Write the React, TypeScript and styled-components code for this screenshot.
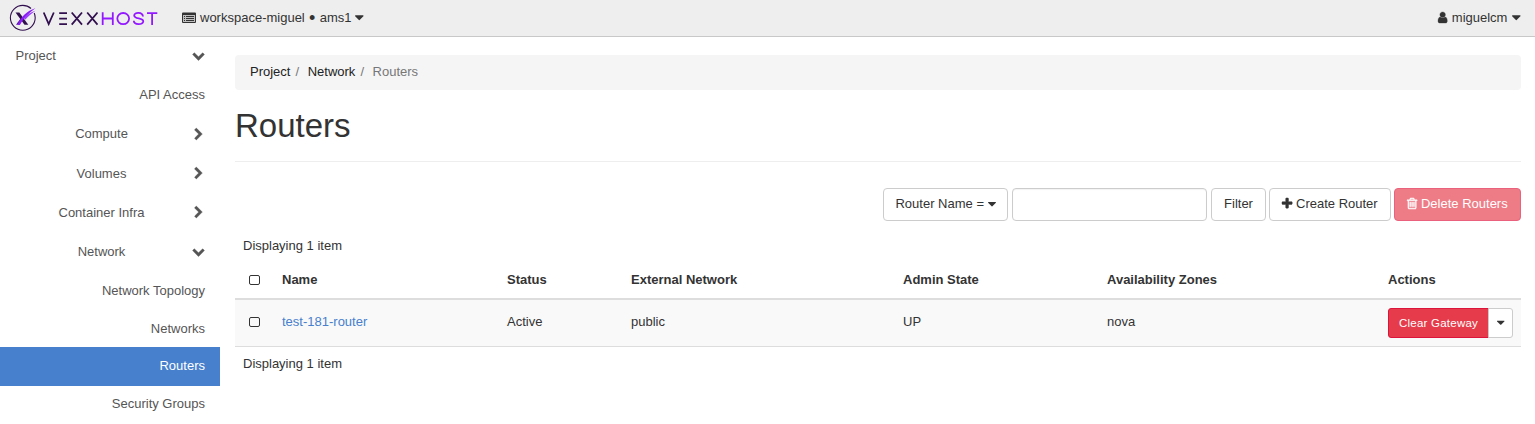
import React from 'react';
import styled, { createGlobalStyle, css } from 'styled-components';

const GlobalStyle = createGlobalStyle`
  * { box-sizing: border-box; }
  body {
    margin: 0;
    background: #fff;
    color: #333;
    font: 13px/18px "Liberation Sans", Arial, sans-serif;
    overflow: hidden;
  }
`;

const paths = {
  trash:
    'M704 736v576q0 14-9 23t-23 9h-64q-14 0-23-9t-9-23v-576q0-14 9-23t23-9h64q14 0 23 9t9 23zm256 0v576q0 14-9 23t-23 9h-64q-14 0-23-9t-9-23v-576q0-14 9-23t23-9h64q14 0 23 9t9 23zm256 0v576q0 14-9 23t-23 9h-64q-14 0-23-9t-9-23v-576q0-14 9-23t23-9h64q14 0 23 9t9 23zm128 724v-948h-896v948q0 22 7 40.5t14.5 27 10.5 8.5h832q3 0 10.5-8.5t14.5-27 7-40.5zm-672-1076h448l-48-117q-7-9-17-11h-317q-10 2-17 11zm928 32v64q0 14-9 23t-23 9h-96v948q0 83-47 143.5t-113 60.5h-832q-66 0-113-58.5t-47-141.5v-952h-96q-14 0-23-9t-9-23v-64q0-14 9-23t23-9h309l70-167q15-37 54-63t79-26h320q40 0 79 26t54 63l70 167h309q14 0 23 9t9 23z',
  plus:
    'M1600 736v192q0 40-28 68t-68 28h-416v416q0 40-28 68t-68 28h-192q-40 0-68-28t-28-68v-416h-416q-40 0-68-28t-28-68v-192q0-40 28-68t68-28h416v-416q0-40 28-68t68-28h192q40 0 68 28t28 68v416h416q40 0 68 28t28 68z',
  user:
    'M1536 1399q0 109-62.5 187t-150.5 78h-854q-88 0-150.5-78t-62.5-187q0-85 8.5-160.5t31.5-152 58.5-131 94-89 134.5-34.5q131 128 313 128t313-128q76 0 134.5 34.5t94 89 58.5 131 31.5 152 8.5 160.5zm-256-887q0 159-112.5 271.5t-271.5 112.5-271.5-112.5-112.5-271.5 112.5-271.5 271.5-112.5 271.5 112.5 112.5 271.5z',
  right:
    'M1363 877l-742 742q-19 19-45 19t-45-19l-166-166q-19-19-19-45t19-45l531-531-531-531q-19-19-19-45t19-45l166-166q19-19 45-19t45 19l742 742q19 19 19 45t-19 45z',
  down:
    'M1683 808l-742 741q-19 19-45 19t-45-19l-742-741q-19-19-19-45.5t19-45.5l166-165q19-19 45-19t45 19l531 531 531-531q19-19 45-19t45 19l166 165q19 19 19 45.5t-19 45.5z',
  caret:
    'M1408 704q0 26-19 45l-448 448q-19 19-45 19t-45-19l-448-448q-19-19-19-45t19-45 45-19h896q26 0 45 19t19 45z',
};

type IconName = keyof typeof paths;

const Glyph = styled.svg`
  display: block;
  flex: none;
  overflow: visible;
  fill: currentColor;
`;

const boxes: Record<IconName, [number, number]> = {
  trash: [192, 1408],
  plus: [192, 1408],
  user: [256, 1280],
  right: [256, 1280],
  down: [0, 1792],
  caret: [384, 1024],
};

function Icon({ name, size = 13, weight = 0 }: { name: IconName; size?: number; weight?: number }) {
  const [x, w] = boxes[name];
  return (
    <Glyph viewBox={`${x} 0 ${w} 1792`} width={(w / 1792) * size} height={size}>
      <path d={paths[name]} stroke="currentColor" strokeWidth={weight} />
    </Glyph>
  );
}

const Navbar = styled.header`
  display: flex;
  align-items: center;
  height: 37px;
  padding: 0 14px 1px 9px;
  background: #eee;
  border-bottom: 1px solid #c8c8c8;
`;

const NavItem = styled.div<{ $gap: number; $end?: boolean }>`
  display: flex;
  align-items: center;
  gap: ${(p) => p.$gap}px;
  margin-left: ${(p) => (p.$end ? 'auto' : '23px')};
  white-space: pre;
`;

const Bullet = styled.span`
  display: inline-block;
  width: 7.7px;
  text-align: center;
  font-size: 18px;
  line-height: 13px;
  vertical-align: -2.5px;
`;

const Body = styled.div`
  display: flex;
`;

const Sidebar = styled.nav`
  flex: none;
  width: 220px;
  color: #555;
`;

const SideRow = styled.div<{ $h: number }>`
  display: flex;
  align-items: center;
  justify-content: space-between;
  height: ${(p) => p.$h}px;
  padding: 0 15px 0 15.5px;
`;

const GroupLabel = styled.span`
  flex: 1;
  padding-right: 4.5px;
  text-align: center;
`;

const Chevron = styled.span<{ $lift?: boolean }>`
  display: flex;
  justify-content: center;
  width: 13px;
  padding-bottom: ${(p) => (p.$lift ? 2 : 0)}px;
`;

const SideLink = styled.div<{ $h: number; $top?: number; $active?: boolean }>`
  height: ${(p) => p.$h}px;
  padding: ${(p) => p.$top ?? 10}px 15px 0;
  text-align: right;
  ${(p) =>
    p.$active &&
    css`
      background: #4780cd;
      color: #fff;
    `}
`;

const Main = styled.main`
  flex: 1;
  padding: 18px 14px 0 15px;
`;

const Breadcrumb = styled.div`
  display: flex;
  height: 35px;
  padding: 8px 15px;
  background: #f5f5f5;
  border-radius: 4px;
`;

const Crumb = styled.span<{ $current?: boolean }>`
  color: ${(p) => (p.$current ? '#777' : '#222')};
  &:not(:first-child)::before {
    content: '/';
    padding: 0 8.6px 0 5px;
    color: #777;
  }
`;

const Title = styled.h1`
  height: 72px;
  margin: 0;
  padding-top: 17px;
  border-bottom: 1px solid #eee;
  font-size: 33px;
  font-weight: 400;
  line-height: 37px;
`;

const Toolbar = styled.div`
  display: flex;
  justify-content: flex-end;
  gap: 3px;
  margin: 26px 0 8px;
`;

const Button = styled.button<{ $w: number; $danger?: boolean }>`
  display: flex;
  align-items: center;
  justify-content: center;
  gap: 3.5px;
  width: ${(p) => p.$w}px;
  height: 33px;
  padding: 0 0 2px;
  border: 1px solid ${(p) => (p.$danger ? '#ea617d' : '#ccc')};
  border-radius: 4px;
  background: ${(p) => (p.$danger ? '#ee7c87' : '#fff')};
  color: ${(p) => (p.$danger ? '#fff' : '#333')};
  font: inherit;
  white-space: nowrap;
`;

const FilterInput = styled.input`
  width: 195px;
  height: 33px;
  margin: 0 1px;
  border: 1px solid #ccc;
  border-radius: 4px;
  box-shadow: inset 0 1px 1px rgba(0, 0, 0, 0.05);
`;

const Caption = styled.div`
  padding: 8px;
`;

const Table = styled.table`
  width: 100%;
  table-layout: fixed;
  border-collapse: separate;
  border-spacing: 0;
  text-align: left;
  th {
    height: 37px;
    padding: 0 8px 2px;
    border-bottom: 2px solid #ddd;
  }
  td {
    height: 47px;
    padding: 0 8px;
    border-bottom: 1px solid #ddd;
    background: #f9f9f9;
  }
`;

const CellText = styled.div`
  padding-bottom: 2px;
`;

const Check = styled.span<{ $raise?: boolean }>`
  display: block;
  width: 11px;
  height: 10px;
  margin: ${(p) => (p.$raise ? '0 6px 2px' : '1px 6px 0')};
  border: 1px solid #333;
  border-radius: 2px;
`;

const Link = styled.a`
  color: #4780cd;
`;

const ActionGroup = styled.div`
  display: flex;
  width: 125px;
  height: 30px;
`;

const ClearButton = styled.button`
  width: 101px;
  padding: 0;
  border: 1px solid #dc143c;
  border-radius: 3px 0 0 3px;
  background: #e53b4a;
  color: #fff;
  font: 11.5px/16px "Liberation Sans", Arial, sans-serif;
  letter-spacing: 0.23px;
`;

const ToggleButton = styled.button`
  display: flex;
  align-items: center;
  justify-content: center;
  width: 25px;
  margin-left: -1px;
  padding: 0 0 1px;
  border: 1px solid #ccc;
  border-radius: 0 3px 3px 0;
  background: #fff;
  color: #333;
`;

function Logo() {
  return (
    <Glyph width="150" height="28" viewBox="9 4 150 28">
      <circle
        cx="22.8"
        cy="17.8"
        r="12.4"
        fill="none"
        stroke="#32104f"
        strokeWidth="1.1"
        strokeDasharray="67 5.5 6 0"
      />
      <path d="M15.5 12.5h3.8l9 12.2h-3.8z" fill="#32104f" />
      <path d="M16 24.7L20.6 18.5L22.8 19.2L18.8 24.7z" fill="#5a1a9c" />
      <path d="M17.6 25C20.3 18 26 11 35.4 8.2C29.2 12.8 23.7 17.7 19.9 25z" fill="#8a1df5" />
      <path d="M24 18.5C27 14.6 31 12 35.4 10.8C31.7 13.4 28.7 15.8 25.4 19.5z" fill="#9a3cff" />
      <g fill="none" strokeWidth="1.8">
        <path
          stroke="#32104f"
          d="M43.7 12.5L48.7 24L53.8 12.5M67 13.2H59.2M67 18.6H59.2M67 24.1H59.2M71.7 12.5L82 24.7M82 12.5L71.7 24.7M87.2 12.5L97.5 24.7M97.5 12.5L87.2 24.7"
        />
        <path
          stroke="#9418ff"
          d="M102.7 12.3V24.9M112.8 12.3V24.9M102.7 18.5H112.8M143 16.5C142.5 11.7 134.2 12 134.2 15.5C134.2 19.5 143.3 17.4 143.3 21.3C143.3 25.2 133.8 25.2 133.8 20.8M147 13.2H157.3M152.1 13V24.9"
        />
        <ellipse cx="123.2" cy="18.6" rx="5.9" ry="5.6" stroke="#9418ff" />
      </g>
    </Glyph>
  );
}

function ListIcon() {
  return (
    <Glyph width="14" height="12" viewBox="0 0 14 12">
      <path d="M1 3H13V10H1Z" opacity="0.25" />
      <path
        fillRule="evenodd"
        d="M1 .5H13Q14 .5 14 1.5V10Q14 11 13 11H1Q0 11 0 10V1.5Q0 .5 1 .5ZM1 3V10H13V3Z"
      />
      <path d="M2 4h1v1h-1zM4 4h8v1H4zM2 6h1v1h-1zM4 6h8v1H4zM2 8h1v1h-1zM4 8h8v1H4z" />
    </Glyph>
  );
}

const groups: { label: string; h: number; open?: boolean }[] = [
  { label: 'Compute', h: 40 },
  { label: 'Volumes', h: 39 },
  { label: 'Container Infra', h: 39 },
  { label: 'Network', h: 39, open: true },
];

const columns: [string, number][] = [
  ['Name', 225],
  ['Status', 124],
  ['External Network', 272],
  ['Admin State', 204],
  ['Availability Zones', 281],
  ['Actions', 141],
];

export default function App() {
  return (
    <>
      <GlobalStyle />
      <Navbar>
        <Logo />
        <NavItem $gap={4}>
          <ListIcon />
          <span>
            workspace-miguel <Bullet>•</Bullet> ams1
          </span>
          <Icon name="caret" size={15} />
        </NavItem>
        <NavItem $gap={5} $end>
          <Icon name="user" weight={40} />
          <span>miguelcm</span>
          <Icon name="caret" size={15} />
        </NavItem>
      </Navbar>
      <Body>
        <Sidebar>
          <SideRow $h={38}>
            <span>Project</span>
            <Chevron $lift>
              <Icon name="down" weight={50} />
            </Chevron>
          </SideRow>
          <SideLink $h={39} $top={11}>
            API Access
          </SideLink>
          {groups.map((g) => (
            <SideRow key={g.label} $h={g.h}>
              <GroupLabel>{g.label}</GroupLabel>
              <Chevron>
                <Icon name={g.open ? 'down' : 'right'} weight={50} />
              </Chevron>
            </SideRow>
          ))}
          <SideLink $h={38} $top={11}>
            Network Topology
          </SideLink>
          <SideLink $h={38} $top={11}>
            Networks
          </SideLink>
          <SideLink $h={39} $active>
            Routers
          </SideLink>
          <SideLink $h={38} $top={9}>
            Security Groups
          </SideLink>
        </Sidebar>
        <Main>
          <Breadcrumb>
            <Crumb>Project</Crumb>
            <Crumb>Network</Crumb>
            <Crumb $current>Routers</Crumb>
          </Breadcrumb>
          <Title>Routers</Title>
          <Toolbar>
            <Button $w={125}>
              Router Name =<Icon name="caret" size={14} />
            </Button>
            <FilterInput />
            <Button $w={55}>Filter</Button>
            <Button $w={122}>
              <Icon name="plus" weight={60} />
              Create Router
            </Button>
            <Button $w={127} $danger>
              <Icon name="trash" weight={60} />
              Delete Routers
            </Button>
          </Toolbar>
          <Caption>Displaying 1 item</Caption>
          <Table>
            <colgroup>
              <col width={39} />
              {columns.map(([name, w]) => (
                <col key={name} width={w} />
              ))}
            </colgroup>
            <thead>
              <tr>
                <th>
                  <Check />
                </th>
                {columns.map(([name]) => (
                  <th key={name}>{name}</th>
                ))}
              </tr>
            </thead>
            <tbody>
              <tr>
                <td>
                  <Check $raise />
                </td>
                <td>
                  <CellText>
                    <Link>test-181-router</Link>
                  </CellText>
                </td>
                {['Active', 'public', 'UP', 'nova'].map((value) => (
                  <td key={value}>
                    <CellText>{value}</CellText>
                  </td>
                ))}
                <td>
                  <ActionGroup>
                    <ClearButton>Clear Gateway</ClearButton>
                    <ToggleButton>
                      <Icon name="caret" size={13} />
                    </ToggleButton>
                  </ActionGroup>
                </td>
              </tr>
            </tbody>
          </Table>
          <Caption>Displaying 1 item</Caption>
        </Main>
      </Body>
    </>
  );
}
